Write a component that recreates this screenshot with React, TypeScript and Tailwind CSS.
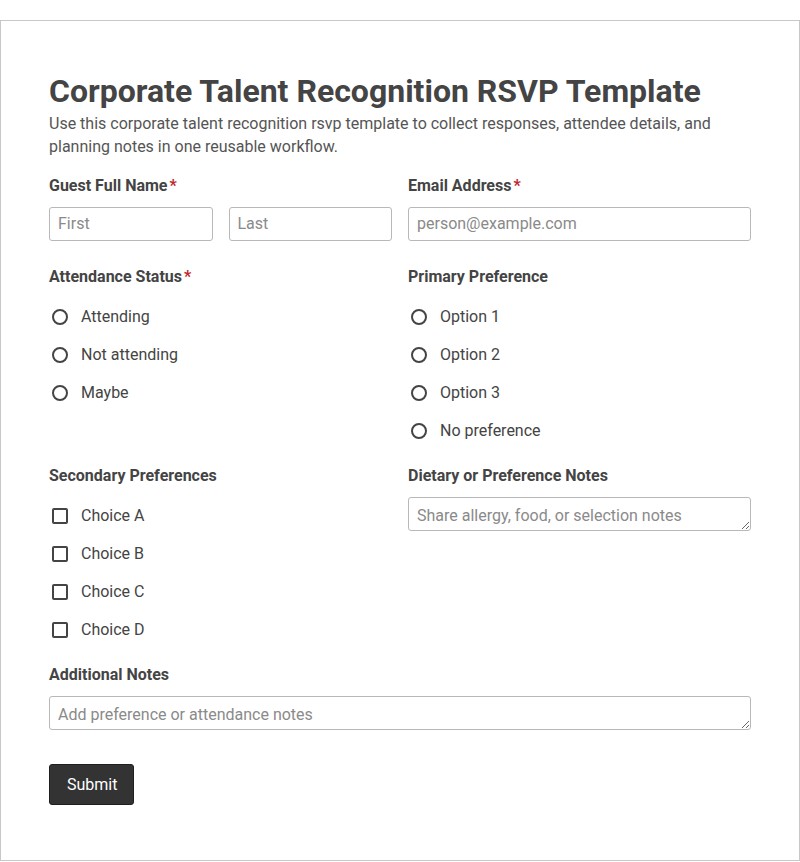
import React from 'react';

const Req = () => <span className="ml-[2px] text-[#c0262d]">*</span>;

const Label: React.FC<{ text: string; required?: boolean }> = ({ text, required }) => (
  <label className="block text-base leading-6 font-bold text-[#444]">
    {text}
    {required && <Req />}
  </label>
);

const inputCls =
  'block h-[34px] w-full rounded-[3px] border border-[#b8b8b8] bg-white px-2 text-base text-[#333] placeholder:text-[#8a8a8a] outline-none';

const OptionList: React.FC<{ items: string[]; kind: 'radio' | 'checkbox' }> = ({ items, kind }) => (
  <div className="mt-[18px] mb-[-1px] flex flex-col gap-[18px]">
    {items.map((item) => (
      <div key={item} className="flex h-5 items-center">
        <span
          className={
            kind === 'radio'
              ? 'ml-[3px] mr-[13px] h-4 w-4 shrink-0 rounded-full border-2 border-[#444]'
              : 'ml-[3px] mr-[13px] h-4 w-4 shrink-0 rounded-[2px] border-2 border-[#444]'
          }
        />
        <span className="text-base leading-6 text-[#444]">{item}</span>
      </div>
    ))}
  </div>
);

export default function App() {
  return (
    <div className="bg-white pt-5" style={{ fontFamily: 'Roboto, "Liberation Sans", sans-serif' }}>
      <div className="border border-[#c8c8c8] px-12 pt-[51px] pb-[55px]">
        <h1 className="mb-[2px] text-[32px] leading-[38px] font-bold text-[#444]">
          Corporate Talent Recognition RSVP Template
        </h1>
        <p className="mb-4 text-base leading-[23px] text-[#555]">
          Use this corporate talent recognition rsvp template to collect responses, attendee details, and planning
          notes in one reusable workflow.
        </p>

        <div className="grid grid-cols-2 gap-x-4 gap-y-6">
          <div>
            <Label text="Guest Full Name" required />
            <div className="mt-[9px] grid grid-cols-2 gap-4">
              <input className={`${inputCls} pb-[2px]`} placeholder="First" />
              <input className={`${inputCls} pb-[2px]`} placeholder="Last" />
            </div>
          </div>
          <div>
            <Label text="Email Address" required />
            <input className={`mt-[9px] ${inputCls} pb-[2px]`} placeholder="person@example.com" />
          </div>

          <div>
            <Label text="Attendance Status" required />
            <OptionList kind="radio" items={['Attending', 'Not attending', 'Maybe']} />
          </div>
          <div>
            <Label text="Primary Preference" />
            <OptionList kind="radio" items={['Option 1', 'Option 2', 'Option 3', 'No preference']} />
          </div>

          <div>
            <Label text="Secondary Preferences" />
            <OptionList kind="checkbox" items={['Choice A', 'Choice B', 'Choice C', 'Choice D']} />
          </div>
          <div>
            <Label text="Dietary or Preference Notes" />
            <textarea
              rows={1}
              className={`mt-[9px] ${inputCls} resize-y pt-[7px] pb-[3px] leading-[22px]`}
              placeholder="Share allergy, food, or selection notes"
            />
          </div>

          <div className="col-span-2">
            <Label text="Additional Notes" />
            <textarea
              rows={1}
              className={`mt-[9px] ${inputCls} resize-y pt-[7px] pb-[3px] leading-[22px]`}
              placeholder="Add preference or attendance notes"
            />
          </div>
        </div>

        <button
          type="button"
          className="mt-[34px] rounded-[3px] border border-[#1f1f1f] bg-[#333] pl-[17px] pr-4 py-2 text-base leading-[23px] text-white"
        >
          Submit
        </button>
      </div>
    </div>
  );
}
